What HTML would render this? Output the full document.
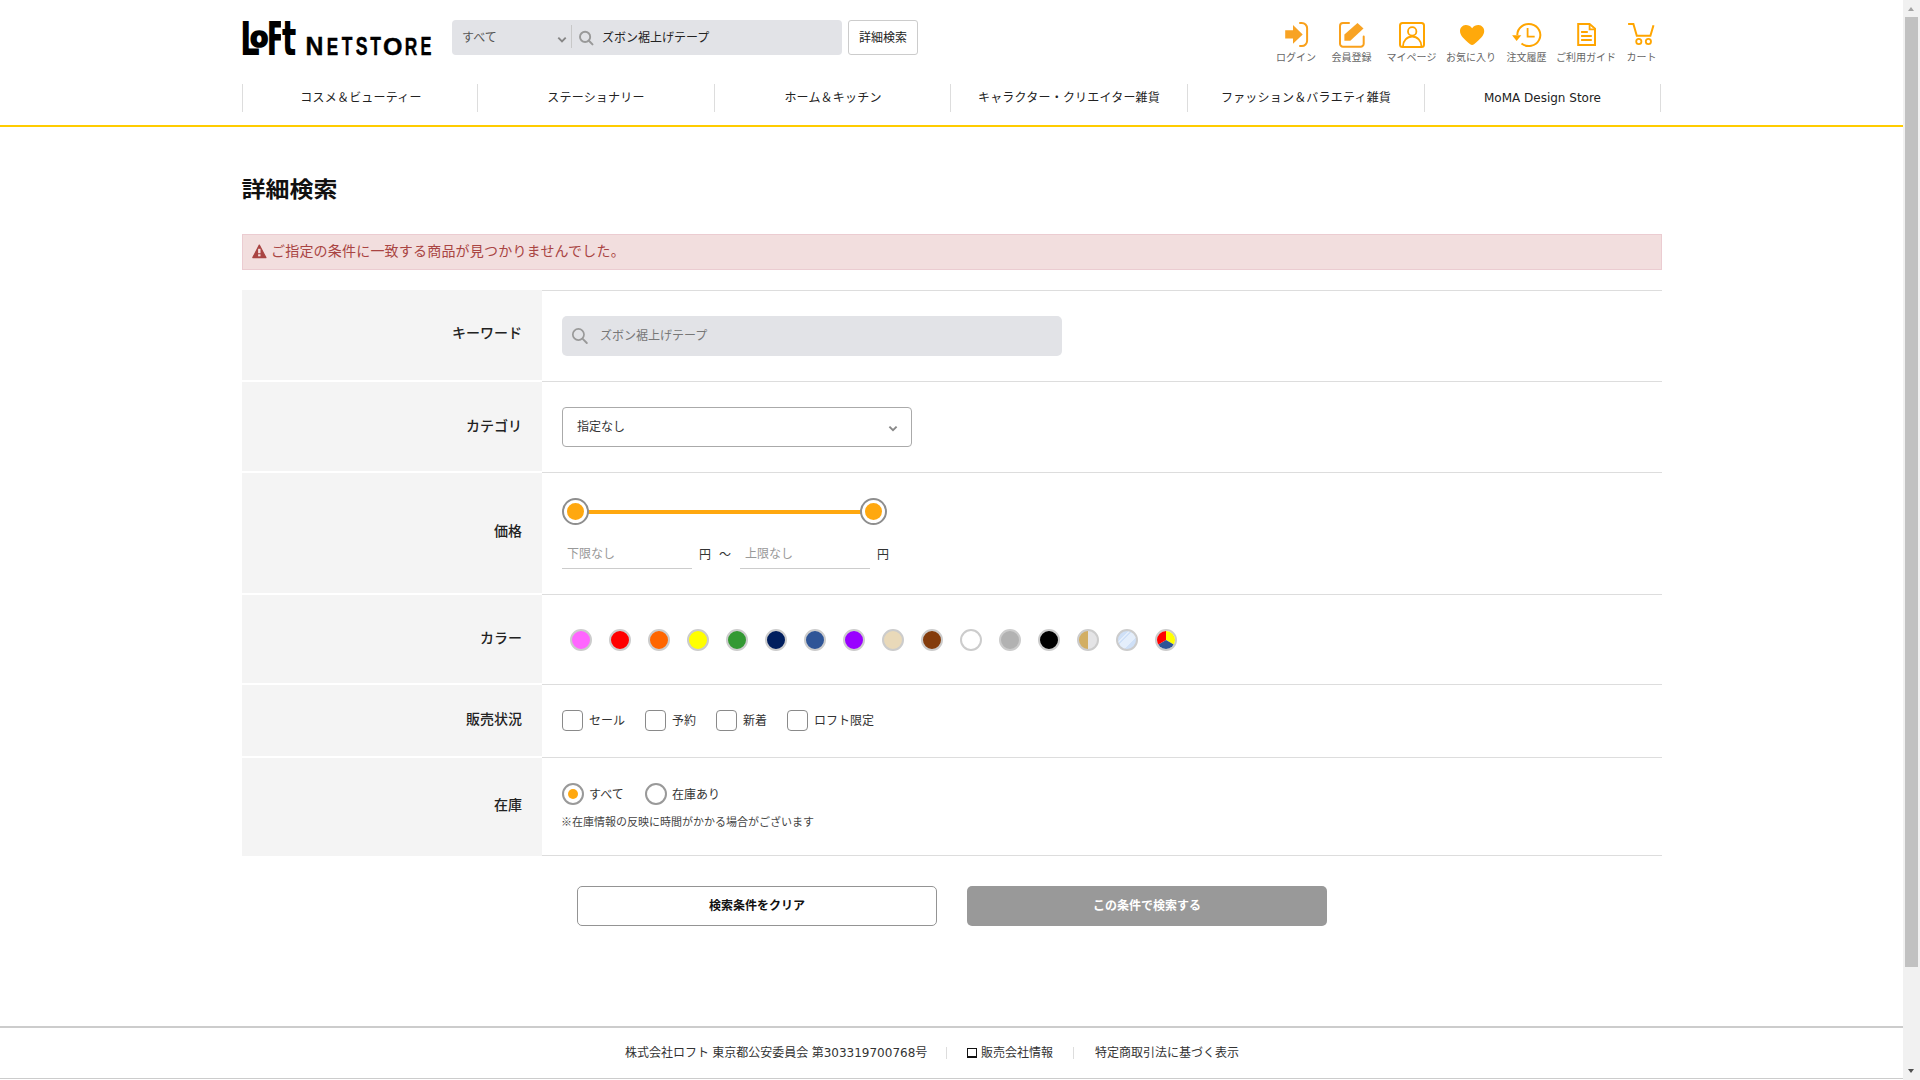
<!DOCTYPE html>
<html lang="ja">
<head>
<meta charset="utf-8">
<title>詳細検索 | ロフトネットストア</title>
<style>
*{box-sizing:border-box;margin:0;padding:0}
html,body{width:1920px;height:1080px;overflow:hidden;background:#fff}
body{position:relative;font-family:"Liberation Sans","Noto Sans CJK JP",sans-serif;color:#222;font-size:12px;line-height:1}
.abs{position:absolute}
#page{position:absolute;left:0;top:0;width:1903px;height:1080px;overflow:hidden;background:#fff}
/* scrollbar */
#sb{position:absolute;left:1903px;top:0;width:17px;height:1080px;background:#f1f1f1}
#sb .thumb{position:absolute;left:2px;top:17px;width:13px;height:950px;background:#c1c1c1}
#sb .up{position:absolute;left:5px;top:7px;width:0;height:0;border-left:3.5px solid transparent;border-right:3.5px solid transparent;border-bottom:4px solid #a3a3a3}
#sb .down{position:absolute;left:5px;top:1069px;width:0;height:0;border-left:3.5px solid transparent;border-right:3.5px solid transparent;border-top:4px solid #505050}
/* header */
#search{position:absolute;left:452px;top:20px;width:390px;height:35px;background:#e2e3e7;border-radius:4px}
#search .sel{position:absolute;left:10px;top:0;height:35px;line-height:36px;font-size:12px;color:#555}
#search .sep{position:absolute;left:119px;top:5px;width:1px;height:23px;background:#c8c8c8}
#search .kw{position:absolute;left:150px;top:0;height:35px;line-height:36px;font-size:12px;color:#222}
#adv{position:absolute;left:848px;top:20px;width:70px;height:35px;border:1px solid #ccc;border-radius:3px;background:#fff;text-align:center;line-height:35px;font-size:12px;color:#222}
.hi{position:absolute;top:52px;width:80px;margin-left:-40px;text-align:center;font-size:10px;color:#666;line-height:12px;white-space:nowrap}
/* nav */
#nav{position:absolute;left:242px;top:84px;width:1420px;height:28px}
#nav .it{position:absolute;top:0;height:28px;width:237px;border-left:1px solid #ddd;text-align:center;line-height:29px;font-size:12px;letter-spacing:0.2px;color:#222;white-space:nowrap}
#navline{position:absolute;left:0;top:125px;width:1903px;height:2px;background:#ffcc00}
/* content */
h1{position:absolute;left:241.5px;top:174px;font-size:24px;line-height:28px;font-weight:bold;color:#111;transform:scaleY(0.9);transform-origin:0 100%}
#alert{position:absolute;left:242px;top:234px;width:1420px;height:36px;background:#f2dede;border:1px solid #ebccd1;color:#a94442;font-size:14px;line-height:34px}
#alert span{position:absolute;left:28px;top:-1px;letter-spacing:0.2px;white-space:nowrap}
.th{position:absolute;left:242px;width:300px;background:#f4f4f4;text-align:right;padding-right:20px;font-weight:500;font-size:14px;letter-spacing:0;color:#222}
.tl{position:absolute;left:542px;width:1120px;height:1px;background:#ddd}
.lbl{font-size:12px;color:#333;white-space:nowrap;position:absolute}
.btn{position:absolute;top:886px;width:360px;height:40px;border-radius:5px;text-align:center;font-weight:bold;font-size:12px;line-height:38px}
#footer{position:absolute;left:0;top:1026px;width:1903px;height:53px;border-top:2px solid #ccc;border-bottom:1px solid #ccc;background:#fff}
#footer span{position:absolute;top:17px;font-size:12px;line-height:16px;color:#333;white-space:nowrap}
.hd{width:27px;height:27px;border-radius:50%;border:2px solid #8e8e8e;background:#fff}
.hd:after{content:"";position:absolute;left:3px;top:3px;width:17px;height:17px;border-radius:50%;background:#ffa80f}
#colors i{position:absolute;top:629px;width:22px;height:22px;border-radius:50%;border:2px solid #ccc;display:block}
.cb{top:710px;width:21px;height:21px;border:1px solid #8a8a8a;border-radius:4px;background:#fff}
.rd{top:783px;width:22px;height:22px;border:2px solid #999;border-radius:50%;background:#fff}
.rd b{position:absolute;left:4px;top:4px;width:10px;height:10px;border-radius:50%;background:#ffa80f}
#footer em{font-style:normal;font-family:"DejaVu Sans","Liberation Sans",sans-serif}
</style>
</head>
<body>
<div id="page">
<svg class="abs" style="left:238px;top:16px" width="200" height="44" viewBox="238 16 200 44" role="img" aria-label="LoFt NETSTORE">
<defs><clipPath id="cF"><rect x="0" y="-80" width="49.3" height="90"/></clipPath></defs><g font-family="DejaVu Sans, Liberation Sans, sans-serif" font-weight="bold" font-size="100" fill="#000"><text transform="translate(240.11 54.7) scale(0.31 0.46)">L</text><text transform="translate(249.92 46.53) scale(0.267 0.28)" stroke="#000" stroke-width="1.5" vector-effect="non-scaling-stroke">o</text><text transform="translate(266.6 54.7) scale(0.29 0.46)" clip-path="url(#cF)">F</text><text transform="translate(282.1 54.7) scale(0.298 0.48)">t</text></g>
<g font-family="Liberation Sans, sans-serif" font-weight="bold" font-size="24.85" fill="#000" stroke="#000" stroke-width="0.4"><text text-anchor="middle" transform="translate(314.41 54.9) scale(0.999 1)">N</text><text text-anchor="middle" transform="translate(332.41 54.9) scale(0.690 1)">E</text><text text-anchor="middle" transform="translate(347.20 54.9) scale(0.705 1)">T</text><text text-anchor="middle" transform="translate(361.74 54.9) scale(0.713 1)">S</text><text text-anchor="middle" transform="translate(375.70 54.9) scale(0.705 1)">T</text><text text-anchor="middle" transform="translate(392.81 54.9) scale(1.008 1)">O</text><text text-anchor="middle" transform="translate(411.05 54.9) scale(0.699 1)">R</text><text text-anchor="middle" transform="translate(425.92 54.9) scale(0.662 1)">E</text></g>
</svg>
<div id="search">
 <div class="sel">すべて</div>
 <svg class="abs" style="left:105px;top:16px" width="10" height="8" viewBox="0 0 10 8"><path d="M1.3 1.6 L5 5.3 L8.7 1.6" fill="none" stroke="#868686" stroke-width="1.9"/></svg>
 <div class="sep"></div>
 <svg class="abs" style="left:126px;top:9px" width="18" height="18" viewBox="0 0 18 18"><circle cx="7.1" cy="7.9" r="5.1" fill="none" stroke="#999" stroke-width="1.9"/><path d="M10.9 11.7 L14.5 15.4" stroke="#999" stroke-width="2" stroke-linecap="round"/></svg>
 <div class="kw">ズボン裾上げテープ</div>
</div>
<div id="adv">詳細検索</div>
<svg class="abs" style="left:1270px;top:16px" width="400" height="36" viewBox="1270 16 400 36" fill="none" stroke="#ffa50d" stroke-width="2">
 <!-- login -->
 <path d="M1285.2 30.3 H1293 V25 L1302.7 34.4 L1293 43.8 V38.4 H1285.2 Z" fill="#f8a324" stroke="none"/>
 <path d="M1300 23 H1301.8 A5.3 5.3 0 0 1 1307.1 28.3 V40.7 A5.3 5.3 0 0 1 1301.8 46 H1300" stroke="#f9a01b" stroke-linecap="round"/>
 <!-- register -->
 <path d="M1349 23 H1343 A3 3 0 0 0 1340 26 V43.7 A3 3 0 0 0 1343 46.7 H1360.7 A3 3 0 0 0 1363.7 43.7 V36.5" stroke="#f9a01b" stroke-linecap="round"/>
 <path d="M1357.5 23 L1363.5 28.6 L1350.3 40.8 H1344.4 V34.6 Z" fill="#f8a324" stroke="none"/>
 <!-- mypage -->
 <rect x="1400" y="23" width="24" height="24" rx="2.5" stroke="#ffa500"/>
 <circle cx="1412.2" cy="31.4" r="4.2" stroke="#ffa500" stroke-width="1.8"/>
 <path d="M1402.9 46.5 A9.3 10 0 0 1 1421.5 46.5" stroke="#ffa500" stroke-width="1.8"/>
 <!-- heart -->
 <path d="M1472.1 28.2 C1470.6 25.6 1467.8 24.8 1465.6 24.9 C1462.4 25.1 1460 27.8 1460 31 C1460 35.6 1464.2 39.2 1470.2 44.2 C1471.3 45.2 1472.9 45.2 1474 44.2 C1480 39.2 1484.2 35.6 1484.2 31 C1484.2 27.8 1481.8 25.1 1478.6 24.9 C1476.4 24.8 1473.6 25.6 1472.1 28.2 Z" fill="#ffa90b" stroke="none"/>
 <!-- history -->
 <path d="M1517.3 35 A11.5 11 0 1 1 1521.5 43.5" stroke="#ffa500" stroke-width="2" stroke-linecap="butt"/>
 <path d="M1512.1 35.3 H1521.3 L1516.6 41 Z" fill="#ffa500" stroke="none"/>
 <path d="M1527.6 28.1 V36.6 H1534.7" stroke="#ffa500" stroke-width="1.8"/>
 <!-- guide -->
 <path d="M1578.2 24 H1589.6 L1595 28.6 V45 H1578.2 Z" stroke="#ffa500" stroke-linejoin="miter"/>
 <path d="M1589.6 24 V29.4 H1595" stroke="#ffa500" stroke-width="1.8"/>
 <path d="M1581.1 32 H1587.8 M1581.1 36 H1591.8 M1581.1 40 H1591.8" stroke="#ffa500"/>
 <!-- cart -->
 <path d="M1628.1 24 H1633.4 L1636.8 35.8 H1650.4 L1653.5 25.2" stroke="#ffa500" stroke-linecap="butt" stroke-linejoin="miter"/>
 <circle cx="1638.8" cy="41.5" r="2.6" stroke="#ffa500" stroke-width="1.8"/>
 <circle cx="1648.4" cy="41.5" r="2.6" stroke="#ffa500" stroke-width="1.8"/>
</svg>
<div class="hi" style="left:1296px">ログイン</div>
<div class="hi" style="left:1351.5px">会員登録</div>
<div class="hi" style="left:1411.5px">マイページ</div>
<div class="hi" style="left:1471px">お気に入り</div>
<div class="hi" style="left:1526.5px">注文履歴</div>
<div class="hi" style="left:1586px">ご利用ガイド</div>
<div class="hi" style="left:1641.5px">カート</div>

<div id="nav">
 <div class="it" style="left:0">コスメ＆ビューティー</div>
 <div class="it" style="left:235px">ステーショナリー</div>
 <div class="it" style="left:472px">ホーム＆キッチン</div>
 <div class="it" style="left:708px">キャラクター・クリエイター雑貨</div>
 <div class="it" style="left:945px">ファッション＆バラエティ雑貨</div>
 <div class="it" style="left:1182px;border-right:1px solid #ddd;letter-spacing:0;font-family:'DejaVu Sans','Liberation Sans',sans-serif">MoMA Design Store</div>
</div>
<div id="navline"></div>

<h1>詳細検索</h1>
<div id="alert">
 <svg class="abs" style="left:8px;top:9px" width="16" height="15" viewBox="0 0 16 15"><path d="M8.3 1.1 L14.9 13.6 H1.8 Z" fill="#a94442" stroke="#a94442" stroke-width="1.2" stroke-linejoin="round"/><rect x="7.1" y="4.8" width="2.4" height="4.4" fill="#f2dede"/><rect x="7.1" y="10.3" width="2.4" height="2" fill="#f2dede"/></svg>
 <span>ご指定の条件に一致する商品が見つかりませんでした。</span>
</div>
<!-- table -->
<div class="th" style="top:290px;height:90px;line-height:87px">キーワード</div>
<div class="th" style="top:382px;height:89px;line-height:89px">カテゴリ</div>
<div class="th" style="top:473px;height:120px;line-height:117px">価格</div>
<div class="th" style="top:595px;height:88px;line-height:86px">カラー</div>
<div class="th" style="top:685px;height:71px;line-height:69px">販売状況</div>
<div class="th" style="top:758px;height:98px;line-height:95px">在庫</div>
<div class="tl" style="top:290px"></div>
<div class="tl" style="top:381px"></div>
<div class="tl" style="top:472px"></div>
<div class="tl" style="top:594px"></div>
<div class="tl" style="top:684px"></div>
<div class="tl" style="top:757px"></div>
<div class="tl" style="top:855px"></div>
<!-- keyword -->
<div class="abs" style="left:562px;top:316px;width:500px;height:40px;background:#e2e3e7;border-radius:5px">
 <svg class="abs" style="left:8px;top:10px" width="20" height="20" viewBox="0 0 20 20"><circle cx="8.4" cy="8.5" r="5.6" fill="none" stroke="#999" stroke-width="1.7"/><path d="M12.5 12.7 L16.8 17" stroke="#999" stroke-width="1.9" stroke-linecap="round"/></svg>
 <div class="abs" style="left:38px;top:0;line-height:40px;font-size:12px;color:#777;white-space:nowrap">ズボン裾上げテープ</div>
</div>
<!-- category -->
<div class="abs" style="left:562px;top:407px;width:350px;height:40px;border:1px solid #aaa;border-radius:4px;background:#fff">
 <div class="abs" style="left:14px;top:0;line-height:38px;font-size:12px;color:#333;white-space:nowrap">指定なし</div>
 <svg class="abs" style="left:325px;top:17px" width="10" height="8" viewBox="0 0 10 8"><path d="M1.4 1.6 L5 5.2 L8.6 1.6" fill="none" stroke="#888" stroke-width="1.9"/></svg>
</div>
<!-- price -->
<div class="abs" style="left:575px;top:510px;width:298px;height:4px;background:#ffa80f"></div>
<div class="abs hd" style="left:562px;top:498px"></div>
<div class="abs hd" style="left:860px;top:498px"></div>
<div class="abs" style="left:562px;top:568px;width:130px;height:1px;background:#ccc"></div>
<div class="abs" style="left:740px;top:568px;width:130px;height:1px;background:#ccc"></div>
<div class="lbl" style="left:567px;top:546px;line-height:16px;color:#999;font-size:12px">下限なし</div>
<div class="lbl" style="left:699px;top:547px;line-height:16px;color:#333">円</div>
<div class="lbl" style="left:719px;top:547px;line-height:16px;color:#333">～</div>
<div class="lbl" style="left:745px;top:546px;line-height:16px;color:#999;font-size:12px">上限なし</div>
<div class="lbl" style="left:877px;top:547px;line-height:16px;color:#333">円</div>
<!-- colors -->
<div id="colors">
<i style="left:570px;background:#ff66ff"></i>
<i style="left:609px;background:#ff0000"></i>
<i style="left:648px;background:#ff6600"></i>
<i style="left:687px;background:#ffff00"></i>
<i style="left:726px;background:#339933"></i>
<i style="left:765px;background:#001e5e"></i>
<i style="left:804px;background:#2f5597"></i>
<i style="left:843px;background:#9900ff"></i>
<i style="left:882px;background:#e9d9b9"></i>
<i style="left:921px;background:#843c0c"></i>
<i style="left:960px;background:#ffffff"></i>
<i style="left:999px;background:#b2b2b2"></i>
<i style="left:1038px;background:#000000"></i>
<i style="left:1077px;background:linear-gradient(90deg,#d2ae63 0,#d2ae63 50%,#e4e4e6 50%,#e4e4e6 100%)"></i>
<i style="left:1116px;background:linear-gradient(135deg,#cfe0f7 0,#cfe0f7 30%,#e4eefb 30%,#e4eefb 34%,#cfe0f7 34%,#cfe0f7 40%,#e4eefb 40%,#e4eefb 68%,#cfe0f7 68%)"></i>
<i style="left:1155px;overflow:hidden"><svg width="18" height="18" viewBox="-9 -9 18 18" style="display:block"><path d="M0 0 L0 -14 A14 14 0 0 1 12.12 7 Z" fill="#ffff00"/><path d="M0 0 L12.12 7 A14 14 0 0 1 -12.12 7 Z" fill="#2f5597"/><path d="M0 0 L-12.12 7 A14 14 0 0 1 0 -14 Z" fill="#ff0000"/></svg></i>
</div>
<!-- status -->
<div class="abs cb" style="left:562px"></div><div class="lbl" style="left:589px;top:713px;line-height:16px">セール</div>
<div class="abs cb" style="left:645px"></div><div class="lbl" style="left:672px;top:713px;line-height:16px">予約</div>
<div class="abs cb" style="left:716px"></div><div class="lbl" style="left:743px;top:713px;line-height:16px">新着</div>
<div class="abs cb" style="left:787px"></div><div class="lbl" style="left:814px;top:713px;line-height:16px">ロフト限定</div>
<!-- stock -->
<div class="abs rd" style="left:562px"><b></b></div><div class="lbl" style="left:589px;top:787px;line-height:16px">すべて</div>
<div class="abs rd" style="left:645px"></div><div class="lbl" style="left:672px;top:787px;line-height:16px">在庫あり</div>
<div class="lbl" style="left:561px;top:814px;line-height:16px;color:#444;font-size:11px">※在庫情報の反映に時間がかかる場合がございます</div>
<!-- buttons -->
<div class="btn" style="left:577px;border:1px solid #949494;background:#fff;color:#111">検索条件をクリア</div>
<div class="btn" style="left:967px;background:#999;color:#fff;line-height:40px">この条件で検索する</div>

<div id="footer">
 <span style="left:625px">株式会社ロフト 東京都公安委員会 第<em>303319700768</em>号</span>
 <div class="abs" style="left:946px;top:19px;width:1px;height:12px;background:#ddd"></div>
 <div class="abs" style="left:967px;top:20px;width:10px;height:10px;border:1px solid #111;border-bottom-width:2px"></div>
 <span style="left:981px">販売会社情報</span>
 <div class="abs" style="left:1073px;top:19px;width:1px;height:12px;background:#ddd"></div>
 <span style="left:1095px">特定商取引法に基づく表示</span>
</div>

</div>
<div id="sb"><div class="up"></div><div class="thumb"></div><div class="down"></div></div>
</body>
</html>
